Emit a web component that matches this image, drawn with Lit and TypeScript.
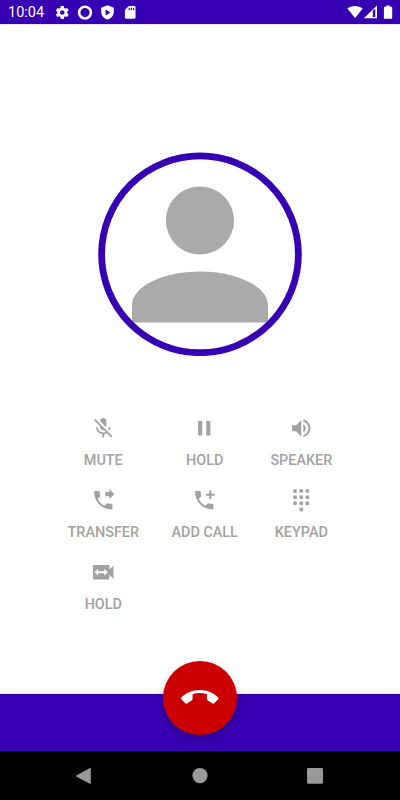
import { LitElement, html, css, svg } from "lit";
import { customElement } from "lit/decorators.js";

const icon = (d: string) => html`<svg viewBox="0 0 24 24">${svg`<path d=${d} />`}</svg>`;

const PHONE =
  "M20 15.5c-1.25 0-2.45-.2-3.57-.57-.35-.11-.74-.03-1.02.24l-2.2 2.2c-2.83-1.44-5.15-3.75-6.59-6.59l2.2-2.21c.28-.26.36-.65.25-1C8.7 6.45 8.5 5.25 8.5 4c0-.55-.45-1-1-1H4c-.55 0-1 .45-1 1 0 9.39 7.61 17 17 17 .55 0 1-.45 1-1v-3.5c0-.55-.45-1-1-1z";

const dot = (x: number, y: number) => `M${x - 2} ${y}a2 2 0 1 0 4 0a2 2 0 1 0-4 0z`;
const KEYPAD =
  [3, 9, 15].map((y) => [6, 12, 18].map((x) => dot(x, y)).join("")).join("") + dot(12, 21);

const actions = [
  { label: "MUTE", d: "M19 11h-1.7c0 .74-.16 1.43-.43 2.05l1.23 1.23c.56-.98.9-2.09.9-3.28zm-4.02.17c0-.06.02-.11.02-.17V5c0-1.66-1.34-3-3-3S9 3.34 9 5v.18l5.98 5.99zM4.27 3L3 4.27l6.01 6.01V11c0 1.66 1.33 3 2.99 3 .22 0 .44-.03.65-.08l1.66 1.66c-.71.33-1.5.52-2.31.52-2.76 0-5.3-2.1-5.3-5.1H5c0 3.41 2.72 6.23 6 6.72V21h2v-3.28c.91-.13 1.77-.45 2.54-.9L19.73 21 21 19.73 4.27 3z" },
  { label: "HOLD", d: "M6 19h4V5H6v14zm8-14v14h4V5h-4z" },
  { label: "SPEAKER", d: "M3 9v6h4l5 5V4L7 9H3zm13.5 3c0-1.77-1.02-3.29-2.5-4.03v8.05c1.48-.73 2.5-2.25 2.5-4.02zM14 3.23v2.06c2.89.86 5 3.54 5 6.71s-2.11 5.85-5 6.71v2.06c4.01-.91 7-4.49 7-8.77s-2.99-7.86-7-8.77z" },
  { label: "TRANSFER", d: PHONE + "M18 11l5-5-5-5v3h-4v4h4v3z" },
  { label: "ADD CALL", d: PHONE + "M16.9 2.5h2v3.1h3.1v2h-3.1v3.1h-2V7.6h-3.1v-2h3.1z" },
  { label: "KEYPAD", d: KEYPAD },
  { label: "HOLD", d: "M18 9.5V6c0-.55-.45-1-1-1H3c-.55 0-1 .45-1 1v12c0 .55.45 1 1 1h14c.55 0 1-.45 1-1v-3.5l4 4v-13l-4 4zm-5 6V13H7v2.5L3.5 12 7 8.5V11h6V8.5l3.5 3.5-3.5 3.5z" },
];

@customElement("app-root")
export class AppRoot extends LitElement {
  static styles = css`
    :host {
      display: flex;
      flex-direction: column;
      height: 800px;
      width: 400px;
      overflow: hidden;
      background: #fff;
      font-family: Roboto, "Liberation Sans", sans-serif;
    }
    svg { display: block; fill: currentColor; }
    .status {
      height: 24px;
      flex: none;
      display: flex;
      align-items: center;
      justify-content: space-between;
      background: #3700b3;
      color: #fff;
      box-shadow: 0 0 1px rgba(55, 0, 179, 0.6);
    }
    .time { font-size: 14.5px; line-height: 24px; padding: 2px 0 0 8px; width: 46px; box-sizing: content-box; }
    .left { display: flex; align-items: center; }
    .notes { display: block; width: 86px; height: 24px; }
    .signals { display: block; width: 56px; height: 24px; }
    .main { flex: 1; display: flex; flex-direction: column; }
    .avatar {
      box-sizing: border-box;
      width: 204px;
      height: 204px;
      margin: 128px auto 0;
    }
    .actions {
      display: grid;
      grid-template-columns: repeat(3, auto);
      column-gap: 32.5px;
      justify-content: start;
      margin: 60.3px 0 0 67.6px;
      color: #a2a2a2;
    }
    .action { height: 72.1px; display: flex; flex-direction: column; align-items: center; }
    .action svg { width: 24.5px; height: 24.5px; }
    .label { margin-top: 9.8px; font-size: 14.4px; line-height: 20px; font-weight: 500; white-space: nowrap; }
    .bar {
      flex: none;
      height: 57px;
      background: #3700b3;
      display: flex;
      justify-content: center;
      align-items: flex-start;
      box-shadow: 0 0 3px rgba(0, 0, 0, 0.2);
    }
    .hangup {
      margin-top: -33px;
      width: 74px;
      height: 74px;
      flex: none;
      border-radius: 50%;
      background: #cc0000;
      color: #fff;
      display: flex;
      align-items: center;
      justify-content: center;
      box-shadow: 0 4px 8px rgba(0, 0, 0, 0.24);
    }
    .hangup svg { width: 37.5px; height: 37.5px; margin-top: -0.5px; }
    .nav { flex: none; height: 49px; background: #000; color: #999; }
  `;

  render() {
    return html`
      <div class="status">
        <div class="left">
          <div class="time">10:04</div>
          <svg class="notes" viewBox="54 0 86 24">
            <path transform="translate(54.5 4.7) scale(.65)" d="M19.43 12.98c.04-.32.07-.64.07-.98s-.03-.66-.07-.98l2.11-1.65c.19-.15.24-.42.12-.64l-2-3.46c-.12-.22-.39-.3-.61-.22l-2.49 1c-.52-.4-1.08-.73-1.69-.98l-.38-2.65C14.46 2.18 14.25 2 14 2h-4c-.25 0-.46.18-.49.42l-.38 2.65c-.61.25-1.17.59-1.69.98l-2.49-1c-.23-.09-.49 0-.61.22l-2 3.46c-.13.22-.07.49.12.64l2.11 1.65c-.04.32-.07.65-.07.98s.03.66.07.98l-2.11 1.65c-.19.15-.24.42-.12.64l2 3.46c.12.22.39.3.61.22l2.49-1c.52.4 1.08.73 1.69.98l.38 2.65c.03.24.24.42.49.42h4c.25 0 .46-.18.49-.42l.38-2.65c.61-.25 1.17-.59 1.69-.98l2.49 1c.23.09.49 0 .61-.22l2-3.46c.12-.22.07-.49-.12-.64l-2.11-1.65zM12 15.5c-1.93 0-3.5-1.57-3.5-3.5s1.57-3.5 3.5-3.5 3.5 1.57 3.5 3.5-1.57 3.5-3.5 3.5z" />
            <circle cx="85" cy="12.6" r="5.9" fill="none" stroke="currentColor" stroke-width="2.6" />
            <path fill-rule="evenodd" d="M107.5 5.3l6.3 2.4v4.3c0 3.5-2.7 6.6-6.3 7.6-3.6-1-6.3-4.1-6.3-7.6V7.7zM105.6 9.5v6l4.8-3z" />
            <path fill-rule="evenodd" d="M128.8 6h5.5c.7 0 1.2.5 1.2 1.2v10.3c0 .7-.5 1.2-1.2 1.2h-8.2c-.7 0-1.2-.5-1.2-1.2v-7.5zM128.6 7.7v2.5h1.2V7.7zM130.8 7.7v2.5h1.2V7.7zM133 7.7v2.5h1.2V7.7z" />
          </svg>
        </div>
        <svg class="signals" viewBox="344 0 56 24">
          <path d="M347.3 8.5C351.6 5 358.4 5 362.8 8.5L355.1 18z" />
          <path fill-rule="evenodd" d="M377 5.5v12.7h-13.2zM372.8 10.8v6.1h2.5V8.8z" />
          <path d="M386.3 5.4h3.5v1.4h1.5c.5 0 .9.4.9.9v10.2c0 .5-.4.9-.9.9h-6.5c-.5 0-.9-.4-.9-.9V7.7c0-.5.4-.9.9-.9h1.5z" />
        </svg>
      </div>
      <div class="main">
        <svg class="avatar" viewBox="0 0 204 204">
          <path fill="#aaa" transform="translate(0 .4) scale(8.5)" d="M12 12c2.21 0 4-1.79 4-4s-1.79-4-4-4-4 1.79-4 4 1.79 4 4 4zm0 2c-4.42 0-8 1.79-8 4v2h16v-2c0-2.21-3.58-4-8-4z" />
          <circle cx="102" cy="102.3" r="98.4" fill="none" stroke="#3700b3" stroke-width="6.8" />
        </svg>
        <div class="actions">
          ${actions.map((a) => html`<div class="action">${icon(a.d)}<div class="label">${a.label}</div></div>`)}
        </div>
      </div>
      <div class="bar">
        <div class="hangup">
          ${icon("M12 9c-1.6 0-3.15.25-4.6.72v3.1c0 .39-.23.74-.56.9-.98.49-1.87 1.12-2.66 1.85-.18.18-.43.28-.7.28-.28 0-.53-.11-.71-.29L.29 13.08c-.18-.17-.29-.42-.29-.7 0-.28.11-.53.29-.71C3.34 8.78 7.46 7 12 7s8.66 1.78 11.71 4.67c.18.18.29.43.29.71 0 .28-.11.53-.29.71l-2.48 2.48c-.18.18-.43.29-.71.29-.27 0-.52-.11-.7-.28-.79-.74-1.69-1.36-2.67-1.85-.33-.16-.56-.5-.56-.9v-3.1C15.15 9.25 13.6 9 12 9z")}
        </div>
      </div>
      <svg class="nav" viewBox="0 0 400 49">
        <path d="M90.8 17v16.2L76.3 25.4q-.6-.4 0-.8L90 17z" />
        <circle cx="200" cy="24.6" r="7.6" />
        <rect x="307" y="17" width="16" height="15.8" rx="1.3" />
      </svg>
    `;
  }
}
